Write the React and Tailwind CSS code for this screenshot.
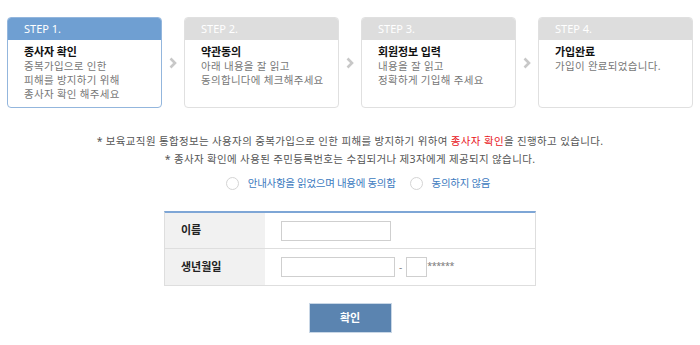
import React from "react";

const steps = [
  { n: "STEP 1.", title: "종사자 확인", desc: ["중복가입으로 인한", "피해를 방지하기 위해", "종사자 확인 해주세요"], active: true },
  { n: "STEP 2.", title: "약관동의", desc: ["아래 내용을 잘 읽고", "동의합니다에 체크해주세요"] },
  { n: "STEP 3.", title: "회원정보 입력", desc: ["내용을 잘 읽고", "정확하게 기입해 주세요"] },
  { n: "STEP 4.", title: "가입완료", desc: ["가입이 완료되었습니다."] },
];

function Arrow() {
  return (
    <div className="w-[22px] flex justify-center pt-[40px]">
      <svg width="8" height="12" viewBox="0 0 8 12">
        <path d="M1.5 1.5 L6 6 L1.5 10.5" fill="none" stroke="#c8c8c8" strokeWidth="2.6" />
      </svg>
    </div>
  );
}

function Step({ s }) {
  return (
    <div
      className={`w-[155px] h-[91px] rounded-[4px] border overflow-hidden flex flex-col ${
        s.active ? "border-[#93b6dd]" : "border-[#e0e0e0]"
      }`}
    >
      <div
        className={`h-[22px] flex items-center pl-[16px] text-[11px] text-white ${
          s.active ? "bg-[#6f9fd2]" : "bg-[#dddddd]"
        }`}
      >
        {s.n}
      </div>
      <div className="pl-[16px] pt-[5px]">
        <div className="text-[11px] font-bold text-[#111] leading-[14px] tracking-[-0.1px]">{s.title}</div>
        {s.desc.map((d, i) => (
          <div key={i} className="text-[10.5px] text-[#777] leading-[14px] tracking-[0.3px]">
            {d}
          </div>
        ))}
      </div>
    </div>
  );
}

function Radio({ label }) {
  return (
    <label className="flex items-center gap-[9px]">
      <span className="w-[13px] h-[13px] rounded-full border border-[#d4d4d4] bg-white" />
      <span className="text-[#3d7bc0]">{label}</span>
    </label>
  );
}

export default function App() {
  return (
    <div
      className="w-[700px] h-[345px] bg-white overflow-hidden"
      style={{ fontFamily: '"Noto Sans", "Noto Sans CJK KR", sans-serif' }}
    >
      <div className="flex pt-[17px] pl-[7px]">
        {steps.map((s, i) => (
          <React.Fragment key={i}>
            {i > 0 && <Arrow />}
            <Step s={s} />
          </React.Fragment>
        ))}
      </div>

      <div className="mt-[24px] flex flex-col items-center text-[10.5px] text-[#555] leading-[18px] tracking-[0.35px]">
        <div>
          * 보육교직원 통합정보는 사용자의 중복가입으로 인한 피해를 방지하기 위하여{" "}
          <span className="text-[#e8141b]">종사자 확인</span>을 진행하고 있습니다.
        </div>
        <div>* 종사자 확인에 사용된 주민등록번호는 수집되거나 제3자에게 제공되지 않습니다.</div>
        <div className="flex gap-[14px] mt-[6px] pl-[16px] tracking-[-0.3px]">
          <Radio label="안내사항을 읽었으며 내용에 동의함" />
          <Radio label="동의하지 않음" />
        </div>
      </div>

      <div className="mx-auto mt-[19px] w-[372px] border-t-[2px] border-t-[#7ea6d6] border-x border-b border-[#dedede]">
        <div className="flex h-[36px] border-b border-[#dedede]">
          <div className="w-[100px] bg-[#f1f1f1] flex items-center pl-[16px] text-[11px] font-bold text-[#222]">이름</div>
          <div className="flex items-center pl-[16px]">
            <div className="w-[110px] h-[20px] border border-[#cfcfcf] bg-white" />
          </div>
        </div>
        <div className="flex h-[36px]">
          <div className="w-[100px] bg-[#f1f1f1] flex items-center pl-[16px] text-[11px] font-bold text-[#222]">생년월일</div>
          <div className="flex items-center pl-[16px]">
            <div className="w-[114px] h-[20px] border border-[#cfcfcf] bg-white" />
            <span className="mx-[4px] text-[10px] text-[#888]">-</span>
            <div className="w-[21px] h-[20px] border border-[#cfcfcf] bg-white" />
            <span className="text-[9px] text-[#777] leading-none tracking-[-0.5px] mb-[3px]">******</span>
          </div>
        </div>
      </div>

      <div className="flex justify-center mt-[17px]">
        <button className="w-[83px] h-[30px] bg-[#5b84b0] border border-[#c9d7e6] text-white text-[11px] font-bold">
          확인
        </button>
      </div>
    </div>
  );
}
